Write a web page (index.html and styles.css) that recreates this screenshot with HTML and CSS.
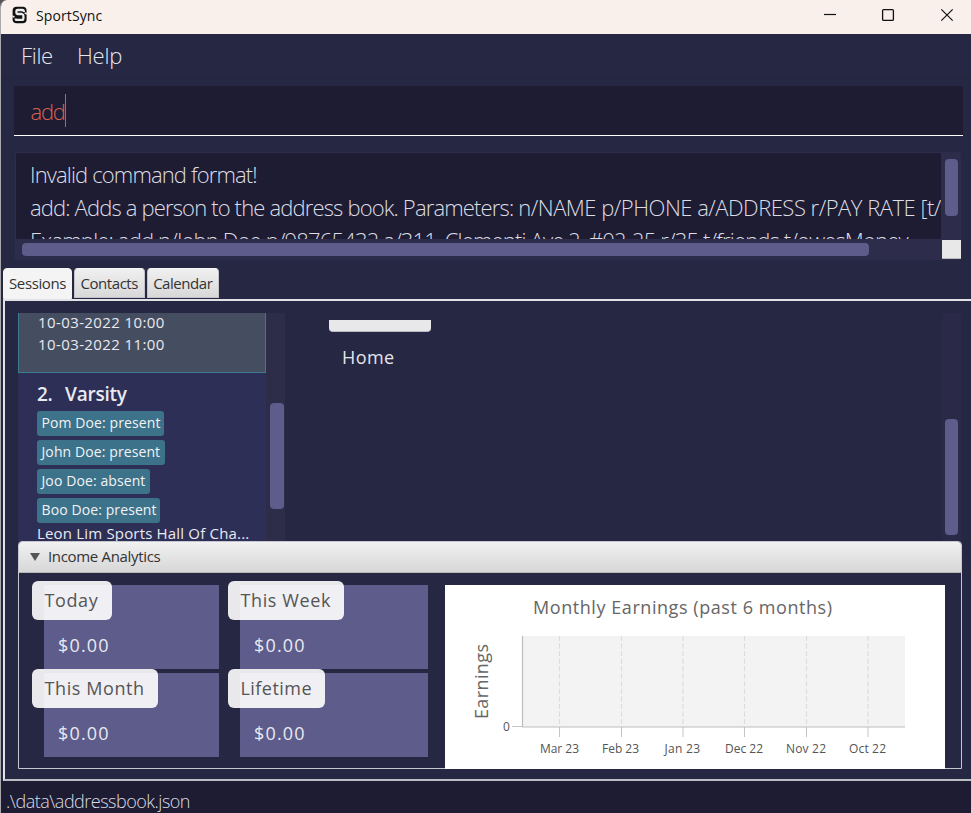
FILE: index.html
```html
<!DOCTYPE html>
<html lang="en">
<head>
<meta charset="utf-8">
<title>SportSync</title>
<link rel="stylesheet" href="styles.css">
</head>
<body>
<div class="window">
  <header class="titlebar">
    <svg class="logo" width="16" height="18" viewBox="0 0 16 18"><rect x=".6" y=".8" width="14" height="16.400" rx="4" fill="#111"/><path d="M14.800 6.600H12.500V7.700L14.800 8.800ZM.4 9.200L2.600 10.200V11.400H.4Z" fill="#f9f0eb"/><path d="M11.800 6V5Q11.700 4 10.500 4H5.600Q4.400 4 4.400 5.200V6.800Q4.400 8 5.700 8H10Q11.400 8.300 11.400 9.800V12.200Q11.400 13.900 9.900 13.900H4.900Q3.700 13.900 3.700 12.400" fill="none" stroke="#eceaea" stroke-width="2.300"/></svg>
    <span class="app-name">SportSync</span>
    <svg class="controls" width="140" height="34" viewBox="0 0 140 34" fill="none" stroke="#111"><path d="M0 14.500H12" stroke-width="1.200"/><rect x="58.600" y="9.600" width="10.800" height="10.800" rx="1" stroke-width="1.300"/><path d="M117.300 9.300L128.700 20.700M128.700 9.300L117.300 20.700" stroke-width="1.200"/></svg>
  </header>
  <nav class="menu"><span class="m-file">File</span><span class="m-help">Help</span></nav>
  <div class="command"><span class="command-text">add</span><i class="caret"></i></div>
  <section class="result">
    <div class="result-text">
      <p class="r1">Invalid command format!</p>
      <p class="r2">add: Adds a person to the address book. Parameters: <span class="params">n/NAME p/PHONE a/ADDRESS r/PAY RATE [t/</span></p>
      <p class="r3">Example: add n/John Doe p/98765432 a/311, Clementi Ave 2, #02-25 r/35 t/friends t/owesMoney</p>
    </div>
    <div class="result-v"><i></i></div>
    <div class="result-h"><i></i></div>
    <div class="corner"></div>
  </section>
  <div class="tabs"><span class="tab active t1"><b>Sessions</b></span><span class="tab t2"><b>Contacts</b></span><span class="tab t3"><b>Calendar</b></span></div>
  <main class="content">
    <div class="upper">
      <div class="sessions">
        <div class="cell selected"><p>10-03-2022 10:00</p><p>10-03-2022 11:00</p></div>
        <div class="cell">
          <h2><span>2.</span><span class="sname">Varsity</span></h2>
          <span class="chip c1">Pom Doe: present</span>
          <span class="chip c2">John Doe: present</span>
          <span class="chip c3">Joo Doe: absent</span>
          <span class="chip c4">Boo Doe: present</span>
          <p class="place">Leon Lim Sports Hall Of Cha...</p>
        </div>
      </div>
      <div class="track list-track"><i></i></div>
      <div class="detail"><div class="stub"></div><span class="home">Home</span></div>
      <div class="track detail-track"><i></i></div>
    </div>
    <section class="analytics">
      <div class="pane-head"><i class="arrow"></i><span class="pane-title">Income Analytics</span></div>
      <div class="pane-body">
        <div class="cards">
          <div class="card"><span class="tag k1">Today</span><span class="amount">$0.00</span></div>
          <div class="card"><span class="tag k2">This Week</span><span class="amount">$0.00</span></div>
          <div class="card"><span class="tag k3">This Month</span><span class="amount">$0.00</span></div>
          <div class="card"><span class="tag k4">Lifetime</span><span class="amount">$0.00</span></div>
        </div>
        <svg class="chart" width="500" height="184" viewBox="0 0 500 184">
          <rect width="500" height="184" fill="#fff"/>
          <rect x="77" y="51" width="383" height="91" fill="#f3f3f3"/>
          <g stroke="#dcdcdc" stroke-width="1.200" stroke-dasharray="5 2.550"><path d="M114.500 51V141M176.500 51V141M238 51V141M299.500 51V141M361.500 51V141M423 51V141"/></g>
          <path d="M114.500 142V152M176.500 142V152M238 142V152M299.500 142V152M361.500 142V152M423 142V152M67 141.500H77" stroke="#c4c4c4"/>
          <path d="M77.500 51V142H460" fill="none" stroke="#bdbdbd" stroke-width="1.200"/>
          <text class="chart-title" x="88" y="29" textLength="299">Monthly Earnings (past 6 months)</text>
          <text class="chart-title" transform="translate(43 134) rotate(-90)" textLength="75">Earnings</text>
          <g class="ticks"><text x="58" y="146" textLength="7">0</text><text x="95" y="168" textLength="39">Mar 23</text><text x="157" y="168" textLength="37">Feb 23</text><text x="219.500" y="168" textLength="35.500">Jan 23</text><text x="280" y="168" textLength="38">Dec 22</text><text x="341" y="168" textLength="40">Nov 22</text><text x="404" y="168" textLength="37">Oct 22</text></g>
        </svg>
      </div>
    </section>
  </main>
  <footer class="status"><span>.\data\addressbook.json</span></footer>
</div>
</body>
</html>
```
FILE: styles.css
```css
* { box-sizing: border-box; }
body { margin: 0; background: #555; font-family: "Open Sans", "Noto Sans", sans-serif; overflow: hidden; }
p, h2 { margin: 0; }
i { display: block; }
.window { width: 971px; height: 813px; display: flex; flex-direction: column; background: #262743; border-left: 1px solid #a9a9ad; border-top-left-radius: 7px; overflow: hidden; white-space: nowrap; }
.titlebar { height: 34px; flex: none; display: flex; background: #f9f0eb; }
.logo { margin: 6px 0 0 11px; }
.app-name { margin-left: 8px; width: 70px; font-size: 14px; line-height: 32px; letter-spacing: .1px; color: #111; }
.controls { margin-left: auto; margin-right: 7px; }
.menu { height: 45px; flex: none; border-bottom: 1px solid #24243e; padding: 0 20px; display: flex; font-size: 22px; line-height: 43px; font-weight: 300; color: #e6e6ee; }
.m-file { width: 56px; letter-spacing: -.3px; }
.m-help { letter-spacing: -.2px; }
.command { height: 50px; flex: none; margin: 7px 8px 0 13px; background: #1d1c33; border-bottom: 1px solid #fff; display: flex; align-items: center; padding-left: 16.5px; color: #d9604c; font-size: 22px; font-weight: 300; }
.command-text { letter-spacing: -1.2px; line-height: 30px; }
.caret { width: 1px; height: 33px; background: #c75f50; }
.result { margin: 16px 10px 0 14px; height: 108px; flex: none; display: grid; grid-template-columns: 1fr 20px; grid-template-rows: 87px 21px; border-radius: 2px; overflow: hidden; background: #2d2d4b; }
.result-text { margin: 1px 0 0 1px; background: #1d1c33; overflow: hidden; padding: 5px 0 0 14px; color: #dedde4; font-size: 22px; font-weight: 300; line-height: 33px; }
.r1 { letter-spacing: -.86px; }
.r2 { letter-spacing: -.84px; }
.params { letter-spacing: -.49px; }
.r3 { letter-spacing: -.83px; }
.result-v { padding: 7px 0 0 4px; }
.result-v i { width: 13px; height: 57px; border-radius: 4px; background: #5d5c8a; }
.result-h { padding: 4px 0 0 7px; }
.result-h i { width: 847px; height: 13px; border-radius: 4px; background: #5d5c8a; }
.corner { margin: 1px 0 1px 1px; background: #e8e8e8; border-bottom: 1px solid #bbb; }
.tabs { height: 31px; flex: none; margin-top: 8px; padding-left: 2px; display: flex; gap: 1.5px; align-items: flex-start; }
.tab { height: 30px; border-radius: 4px 4px 0 0; background: linear-gradient(#f0f0f0, #d8d8d8); border: 1px solid #c4c4c8; border-top-color: #f6f6f6; color: #333; font-size: 15px; line-height: 29px; text-align: center; }
.tab b { font-weight: 400; letter-spacing: -.45px; }
.tab.active { height: 31px; background: #f4f4f4; border-color: #f4f4f4; }
.t1 { width: 69px; }
.t1 b { letter-spacing: -.4px; }
.t2 { width: 71.5px; }
.t3 { width: 72.5px; }
.content { height: 482px; flex: none; margin-left: 2px; border: 2px solid #e2e2e6; border-right: 0; border-bottom-color: #bdbdc4; padding: 12px 9px 0 13px; }
.upper { height: 228px; display: flex; padding-right: 1px; }
.sessions { width: 248px; height: 228px; overflow: hidden; background: #2d2f57; color: #e9e9f0; }
.cell { padding-left: 19px; }
.cell.selected { height: 60px; background: #444e60; border: 1px solid #3e7b91; border-top: 0; font-size: 15px; line-height: 22px; letter-spacing: .4px; }
.cell.selected p { position: relative; top: -2px; }
.cell h2 { font-size: 19px; line-height: 26px; font-weight: 600; padding-top: 8px; height: 38px; letter-spacing: -.25px; display: flex; }
.sname { margin-left: 12.5px; }
.chip { display: block; height: 25px; margin-bottom: 4px; border-radius: 3px; background: #3d738a; padding-left: 4.5px; font-size: 14px; line-height: 24px; letter-spacing: .1px; color: #f2f2f5; }
.c1 { width: 127px; }
.c2 { width: 128px; }
.c3 { width: 113px; }
.c4 { width: 123px; }
.place { font-size: 15px; line-height: 20px; margin-top: -4px; letter-spacing: .18px; }
.track { width: 19px; background: #2d2d4a; }
.list-track { padding: 90px 0 0 4px; }
.list-track i { width: 14px; height: 106px; border-radius: 4px; background: #5d5c8a; }
.detail { flex: 1; padding: 7px 0 0 44px; }
.stub { width: 102px; height: 12px; border-radius: 0 0 4px 4px; background: #e8e8ea; border-bottom: 1px solid #babac4; }
.home { display: block; margin: 12px 0 0 13px; font-size: 18px; line-height: 26px; letter-spacing: .4px; color: #e4e4ea; }
.detail-track { padding: 106px 0 0 3px; background: #2a2a48; }
.detail-track i { width: 13px; height: 116px; border-radius: 4px; background: #5d5c8a; }
.analytics { width: 944px; height: 228px; border: 1px solid #c7c7cf; border-radius: 4px 4px 0 0; }
.pane-head { height: 31px; display: flex; align-items: center; border-bottom: 1px solid #b6b6b8; border-radius: 3px 3px 0 0; background: linear-gradient(#f1f1f1, #d7d7d7); font-size: 15px; letter-spacing: -.33px; color: #333; }
.pane-title { padding-bottom: 2px; }
.arrow { margin: 0 8.500px 0 10.500px; border: 5.5px solid transparent; border-top: 8px solid #555; border-bottom: 0; }
.pane-body { display: flex; padding: 12px 0 0 25px; }
.cards { width: 401px; display: grid; grid-template-columns: 175px 188px; grid-template-rows: 84px 84px; gap: 4px 21px; }
.card { background: #5d5c8a; font-size: 18px; letter-spacing: .6px; }
.tag { display: block; height: 39px; margin: -4px 0 0 -12px; padding-left: 12.5px; border-radius: 6px; background: rgba(255,255,255,.9); color: #555; line-height: 39px; }
.k1 { width: 80px; }
.k2 { width: 116px; }
.k3 { width: 126px; }
.k4 { width: 97px; letter-spacing: .45px; }
.amount { display: block; padding: 12px 0 0 14px; line-height: 27px; letter-spacing: 1.15px; color: #e9e9f2; }
.chart { display: block; flex: none; }
.chart-title { font-size: 18px; font-weight: 500; fill: #666; }
.ticks { font-size: 12px; fill: #555; }
.status { flex: 1; background: #1d1c33; padding-left: 5px; font-size: 18px; font-weight: 300; line-height: 41px; letter-spacing: -.5px; color: #dcdce4; }
```
